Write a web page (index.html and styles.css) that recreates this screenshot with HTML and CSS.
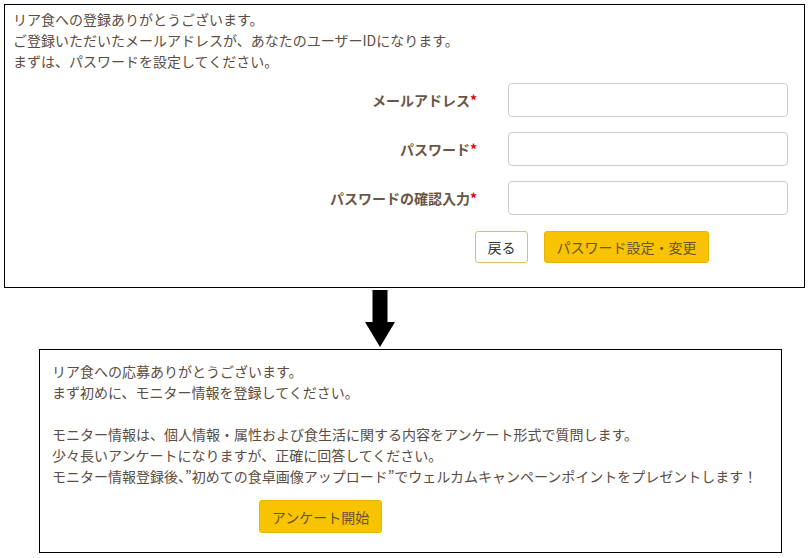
FILE: index.html
```html
<!DOCTYPE html>
<html lang="ja">
<head>
<meta charset="utf-8">
<title>リア食 パスワード設定</title>
<link rel="stylesheet" href="styles.css">
</head>
<body>
<div class="panel panel-top">
  <p class="msg">リア食への登録ありがとうございます。<br>ご登録いただいたメールアドレスが、あなたのユーザーIDになります。<br>まずは、パスワードを設定してください。</p>
  <form class="form">
    <div class="row">
      <label class="label">メールアドレス<span class="req">*</span></label>
      <input class="input" type="text">
    </div>
    <div class="row">
      <label class="label">パスワード<span class="req">*</span></label>
      <input class="input" type="password">
    </div>
    <div class="row">
      <label class="label">パスワードの確認入力<span class="req">*</span></label>
      <input class="input" type="password">
    </div>
    <div class="actions">
      <button type="button" class="btn btn-back">戻る</button>
      <button type="button" class="btn btn-yellow">パスワード設定・変更</button>
    </div>
  </form>
</div>
<div class="arrow-wrap">
  <svg class="arrow" width="32" height="58" viewBox="0 0 32 58">
    <polygon points="8.5,0 23.5,0 23.5,32 31,32 16,57 1,32 8.5,32" fill="#000"/>
  </svg>
</div>
<div class="panel panel-bottom">
  <p class="msg">リア食への応募ありがとうございます。<br>まず初めに、モニター情報を登録してください。<br><br>モニター情報は、個人情報・属性および食生活に関する内容をアンケート形式で質問します。<br>少々長いアンケートになりますが、正確に回答してください。<br>モニター情報登録後、”初めての食卓画像アップロード”でウェルカムキャンペーンポイントをプレゼントします！</p>
  <div class="start">
    <button type="button" class="btn btn-yellow btn-start">アンケート開始</button>
  </div>
</div>
</body>
</html>
```
FILE: styles.css
```css
html, body {
  margin: 0;
  padding: 0;
  background: #fff;
}
body {
  font-family: "Noto Sans CJK JP", "Noto Sans", sans-serif;
  font-size: 14px;
  color: #5b4d42;
}
.panel {
  border: 1px solid #000;
  box-sizing: border-box;
}
.panel-top {
  margin: 4px 0 0 4px;
  width: 801px;
  height: 284px;
  padding: 4px 16px 0 8px;
}
.msg {
  margin: 0;
  line-height: 21px;
}
.form {
  margin: 11px 0 0 0;
  display: flex;
  flex-direction: column;
  gap: 15px;
}
.row {
  display: flex;
  align-items: center;
}
.label {
  width: 464px;
  text-align: right;
  font-weight: bold;
  color: #6a5546;
  margin-right: 31px;
}
.req {
  color: #e60012;
}
.input {
  width: 280px;
  height: 34px;
  box-sizing: border-box;
  border: 1px solid #cccccc;
  border-radius: 4px;
  background: #fff;
  margin: 0;
  padding: 4px 8px;
}
.actions {
  display: flex;
  gap: 16px;
  margin-left: 462px;
  margin-top: 1px;
}
.btn {
  font-family: inherit;
  font-size: 14px;
  height: 32px;
  box-sizing: border-box;
  border-radius: 3px;
  margin: 0;
  padding: 0;
  white-space: nowrap;
  cursor: pointer;
}
.btn-back {
  width: 53px;
  background: #fff;
  border: 1px solid #e2be62;
  color: #333;
}
.btn-yellow {
  width: 165px;
  background: #f8c300;
  border: 1px solid #eab400;
  color: #6b5336;
}
.arrow-wrap {
  height: 61px;
  display: flex;
  padding-left: 364px;
  padding-top: 2px;
  box-sizing: border-box;
}
.panel-bottom {
  margin-left: 39px;
  width: 743px;
  height: 204px;
  padding: 11px 12px 0 12px;
}
.start {
  margin-top: 13px;
  padding-left: 207px;
}
.btn-start {
  width: 123px;
  height: 33px;
}
```
